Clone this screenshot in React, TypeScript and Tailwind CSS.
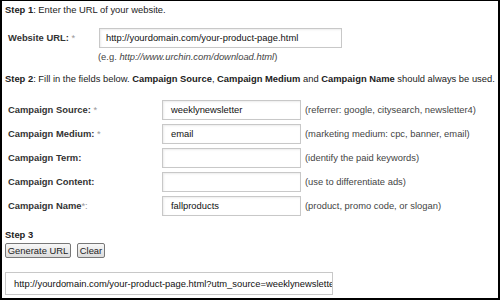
export default function App() {
  const rows = [
    { label: "Campaign Source:", req: " *", value: "weeklynewsletter", hint: "(referrer: google, citysearch, newsletter4)" },
    { label: "Campaign Medium:", req: " *", value: "email", hint: "(marketing medium: cpc, banner, email)" },
    { label: "Campaign Term:", req: "", value: "", hint: "(identify the paid keywords)" },
    { label: "Campaign Content:", req: "", value: "", hint: "(use to differentiate ads)" },
    { label: "Campaign Name", req: "*:", value: "fallproducts", hint: "(product, promo code, or slogan)" },
  ]

  return (
    <div className="w-[500px] h-[300px] overflow-hidden bg-white border-t border-l-2 border-r-2 border-b-2 border-black text-[#222] text-[9.4px] leading-none font-['Liberation_Sans',Arial,sans-serif] whitespace-nowrap">
      {/* Step 1 */}
      <div className="pl-[3px] h-[18px] flex items-center">
        <span><b>Step 1</b>: Enter the URL of your website.</span>
      </div>

      <div className="flex items-center mt-[9px] h-[20px]">
        <div className="w-[97px] pl-[6px] font-bold text-[#333]">
          Website URL: <span className="font-normal text-[#999]">*</span>
        </div>
        <div className="w-[243px] h-[20px] border border-[#c8c8c8] shadow-[inset_1px_1px_2px_rgba(0,0,0,0.08)] flex items-center pl-[6px] text-[#111]">
          http://yourdomain.com/your-product-page.html
        </div>
      </div>
      <div className="pl-[96px] mt-[2px] h-[14px] flex items-center text-[#444]">
        <span>(e.g. <i>http://www.urchin.com/download.html</i>)</span>
      </div>

      {/* Step 2 */}
      <div className="pl-[3px] mt-[8px] h-[14px] flex items-center">
        <span>
          <b>Step 2</b>: Fill in the fields below. <b>Campaign Source</b>, <b>Campaign Medium</b> and <b>Campaign Name</b> should always be used.
        </span>
      </div>

      <div className="mt-[14px] flex flex-col gap-[4px]">
        {rows.map((r) => (
          <div key={r.label} className="flex items-center h-[20px]">
            <div className="w-[160px] pl-[6px] font-bold text-[#333]">
              {r.label}<span className="font-normal text-[#999]">{r.req}</span>
            </div>
            <div className="w-[139px] h-[20px] border border-[#c8c8c8] shadow-[inset_1px_1px_2px_rgba(0,0,0,0.08)] flex items-center pl-[8px] text-[#111]">
              {r.value}
            </div>
            <div className="pl-[4px] text-[#444]">{r.hint}</div>
          </div>
        ))}
      </div>

      {/* Step 3 */}
      <div className="pl-[3px] mt-[12px] h-[14px] flex items-center font-bold">Step 3</div>
      <div className="flex gap-[6px] pl-[3px] mt-[1px]">
        <button className="w-[66px] h-[15px] border border-[#777] rounded-[2px] bg-gradient-to-b from-[#f8f8f8] to-[#dcdcdc] text-[#222]">
          Generate URL
        </button>
        <button className="w-[28px] h-[15px] border border-[#777] rounded-[2px] bg-gradient-to-b from-[#f8f8f8] to-[#dcdcdc] text-[#222]">
          Clear
        </button>
      </div>
      <div className="ml-[3px] mt-[14px] w-[328px] h-[23px] border border-[#c8c8c8] flex items-center pl-[8px] overflow-hidden text-[#111]">
        http://yourdomain.com/your-product-page.html?utm_source=weeklynewslette
      </div>
    </div>
  )
}
